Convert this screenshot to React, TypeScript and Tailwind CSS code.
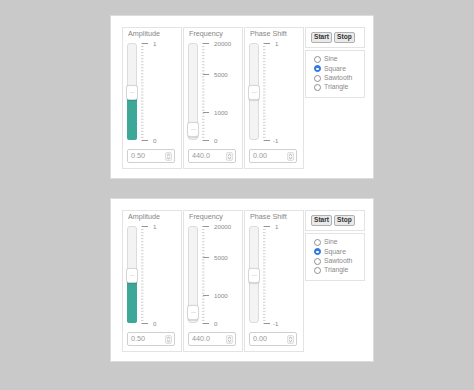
import React from 'react';

type Mark = { at: number; label: string };

type Chan = {
  title: string;
  value: string;
  pos: number; // 0 top .. 1 bottom, thumb centre
  fill?: boolean;
  marks: Mark[];
};

const TRACK_H = 97;

const channels: Chan[] = [
  { title: 'Amplitude', value: '0.50', pos: 0.5, fill: true, marks: [{ at: 0, label: '1' }, { at: 97, label: '0' }] },
  {
    title: 'Frequency', value: '440.0', pos: 0.88,
    marks: [{ at: 0, label: '20000' }, { at: 31, label: '5000' }, { at: 69, label: '1000' }, { at: 97, label: '0' }],
  },
  { title: 'Phase Shift', value: '0.00', pos: 0.5, marks: [{ at: 0, label: '1' }, { at: 97, label: '-1' }] },
];

function Scale({ marks }: { marks: Mark[] }) {
  const minor: number[] = [];
  for (let y = 0; y <= TRACK_H; y += 3.03) minor.push(Math.round(y * 10) / 10);
  return (
    <svg width="40" height={TRACK_H} className="overflow-visible" viewBox={`0 0 40 ${TRACK_H}`}>
      {minor.map((y, i) => (
        <line key={i} x1="1" x2="3.5" y1={y + 0.5} y2={y + 0.5} stroke="#c4c4c4" strokeWidth="0.8" />
      ))}
      {marks.map(m => (
        <g key={m.label}>
          <line x1="2" x2="8" y1={m.at + 0.5} y2={m.at + 0.5} stroke="#8a8a8a" strokeWidth="0.9" />
          <text x={m.label === '-1' ? 11 : 13} y={m.at + 2.6} fontSize="6.2" fill="#8a8a8a"
            fontFamily="'Liberation Sans', Arial, sans-serif">{m.label}</text>
        </g>
      ))}
    </svg>
  );
}

function Spinner() {
  return (
    <svg width="7" height="9" viewBox="0 0 7 9">
      <rect x="0.5" y="0.5" width="6" height="8" rx="1.5" fill="#f4f4f4" stroke="#cfcfcf" strokeWidth="0.6" />
      <path d="M2 3.6 L3.5 2.2 L5 3.6" fill="none" stroke="#999" strokeWidth="0.7" />
      <path d="M2 5.4 L3.5 6.8 L5 5.4" fill="none" stroke="#999" strokeWidth="0.7" />
    </svg>
  );
}

function Group({ c }: { c: Chan }) {
  const thumbTop = c.pos * TRACK_H - 7.5;
  return (
    <div className="w-[60px] h-[142px] border border-[#e3e3e3] flex flex-col pl-[4px] pt-[1px]">
      <div className="text-[7.2px] leading-[10px] text-[#858585] pl-[1px]">{c.title}</div>
      <div className="mt-[4px] flex h-[97px]">
        <div className="relative w-[10px] h-[97px] bg-[#f3f3f3] border border-[#dcdcdc] rounded-[3px]">
          {c.fill && (
            <div className="absolute left-[-1px] right-[-1px] bottom-[-1px] top-[48px] bg-[#3da898] rounded-b-[2px]" />
          )}
          <div
            className="absolute left-[-2px] w-[12px] h-[15px] bg-white border border-[#d6d6d6] rounded-[3px] shadow-[0_0.5px_1px_rgba(0,0,0,0.12)] flex items-center justify-center"
            style={{ top: thumbTop }}
          >
            <div className="w-[5px] h-[1px] bg-[#e6e6e6]" />
          </div>
        </div>
        <div className="ml-[3px]">
          <Scale marks={c.marks} />
        </div>
      </div>
      <div className="mt-[9px] w-[48px] h-[14px] border border-[#d0d0d0] rounded-[2px] flex items-center justify-between pl-[3px] pr-[2px]">
        <span className="text-[7.2px] text-[#9a9a9a]">{c.value}</span>
        <Spinner />
      </div>
    </div>
  );
}

function Radio({ label, checked }: { label: string; checked?: boolean }) {
  return (
    <div className="h-[9.33px] flex items-center gap-[3px]">
      {checked ? (
        <div className="w-[7px] h-[7px] rounded-full bg-[#2f7ef3] border border-[#2a6ed6] flex items-center justify-center">
          <div className="w-[2.5px] h-[2.5px] rounded-full bg-white" />
        </div>
      ) : (
        <div className="w-[7px] h-[7px] rounded-full bg-white border border-[#8f8f8f]" />
      )}
      <span className="text-[6.8px] text-[#8a8a8a] leading-none">{label}</span>
    </div>
  );
}

function Panel() {
  return (
    <div className="w-[264px] h-[164px] bg-white border border-[#dcdcdc] pl-[11px] pt-[11px] flex gap-[1px]">
      {channels.map(c => <Group key={c.title} c={c} />)}
      <div className="flex flex-col gap-[2px]">
        <div className="w-[60px] h-[21px] border border-[#e3e3e3] flex items-center pl-[5px] gap-[2px]">
          <button className="h-[11px] px-[2px] bg-[#e9e9e9] border border-[#b0b0b0] rounded-[2px] text-[6.6px] font-bold text-[#333] leading-none">Start</button>
          <button className="h-[11px] px-[2px] bg-[#e9e9e9] border border-[#b0b0b0] rounded-[2px] text-[6.6px] font-bold text-[#333] leading-none">Stop</button>
        </div>
        <div className="w-[60px] h-[48px] border border-[#e3e3e3] pl-[8px] pt-[4px] flex flex-col">
          <Radio label="Sine" />
          <Radio label="Square" checked />
          <Radio label="Sawtooth" />
          <Radio label="Triangle" />
        </div>
      </div>
    </div>
  );
}

export default function App() {
  return (
    <div className="w-[474px] h-[390px] bg-[#c9c9c9] pt-[15px] pl-[110px] flex flex-col gap-[19px] font-['Liberation_Sans',Arial,sans-serif]">
      <Panel />
      <Panel />
    </div>
  );
}
